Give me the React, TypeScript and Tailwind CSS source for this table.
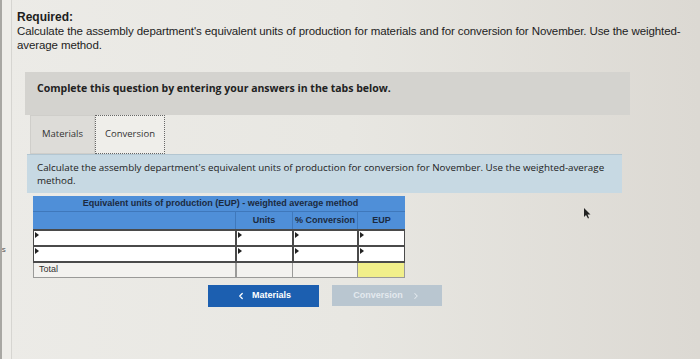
import { ChevronLeft, ChevronRight } from 'lucide-react'

// Tabbed EUP worksheet, photographed screen

const rows = [0, 1]

function Marker() {
  return <span className="absolute left-[1px] top-[1px] w-0 h-0 border-t-[3px] border-b-[3px] border-l-[4px] border-t-transparent border-b-transparent border-l-[#222]" />
}

export default function App() {
  return (
    <div className="relative w-[700px] h-[359px] overflow-hidden flex bg-linear-to-r from-[#ecebe7] via-[#e8e7e2] to-[#dcd9d3] font-['Liberation_Sans',Arial,sans-serif] text-[#1d1d1d]">
      {/* clipped sidebar at the left edge */}
      <div className="w-[12px] shrink-0 border-l-[2px] border-[#a8a7a3] border-r border-r-[#d6d5d1] bg-[#eeede9] pt-[246px] text-[8px] text-[#555] leading-none overflow-hidden">
        <span className="block -ml-[3px]">rs</span>
      </div>

      <div className="flex-1 pl-[5px] pt-[10px]">
        <p className="text-[12px] leading-[14px] font-bold">Required:</p>
        <p className="text-[11.5px] leading-[14px] tracking-[-0.1px] whitespace-nowrap">
          Calculate the assembly department's equivalent units of production for materials and for conversion for November. Use the weighted-
          <br />
          average method.
        </p>

        <div className="mt-[20px] ml-[8px] w-[605px] h-[43px] bg-[#d4d3cf] pl-[12px] pt-[9px] font-['Open_Sans',sans-serif] text-[10.5px] font-bold text-[#222]">
          Complete this question by entering your answers in the tabs below.
        </div>

        {/* tabs */}
        <div className="ml-[13px] flex h-[39px] font-['Open_Sans',sans-serif] text-[9.5px] text-[#333]">
          <div className="w-[65px] bg-[#dddcd8] border border-[#cfceca] flex items-center justify-center">Materials</div>
          <div className="w-[70px] bg-[#efeeea] border border-dotted border-[#666] flex items-center justify-center">Conversion</div>
        </div>

        <div className="ml-[10px] w-[595px] h-[39px] bg-[#c7d9e3] border-t border-[#b3c6d1] pl-[10px] pt-[6px] font-['Open_Sans',sans-serif] text-[9.8px] leading-[13px] text-[#222] whitespace-nowrap">
          Calculate the assembly department's equivalent units of production for conversion for November. Use the weighted-average
          <br />
          method.
        </div>

        {/* EUP table */}
        <div className="mt-[3px] ml-[16px] w-[372px] text-[9px] font-bold text-[#1b2a3f]">
          <div className="h-[16px] bg-[#4f8fd8] border-b border-[#3f78bb] flex items-center justify-center pl-[3px]">
            Equivalent units of production (EUP) - weighted average method
          </div>
          <div className="h-[17px] bg-[#4f8fd8] grid grid-cols-[202px_57px_65px_48px]">
            <div />
            <div className="border-l border-[#3f78bb] flex items-center justify-center">Units</div>
            <div className="border-l border-[#3f78bb] flex items-center justify-center">% Conversion</div>
            <div className="border-l border-[#3f78bb] flex items-center justify-center">EUP</div>
          </div>
          {rows.map((r) => (
            <div key={r} className="h-[16px] grid grid-cols-[202px_57px_65px_48px] border-t-2 border-[#4a4a4a] bg-white">
              <div className="relative border-l border-[#4a4a4a]"><Marker /></div>
              <div className="relative border-l-2 border-[#4a4a4a]"><Marker /></div>
              <div className="relative border-l-2 border-[#4a4a4a]"><Marker /></div>
              <div className="relative border-l-2 border-r border-[#4a4a4a]"><Marker /></div>
            </div>
          ))}
          <div className="h-[17px] grid grid-cols-[202px_57px_65px_48px] border-t-2 border-[#4a4a4a] bg-[#f3f2ef] font-normal text-[9px] text-[#333]">
            <div className="border-l border-b border-[#9a9a98] pl-[5px] flex items-center">Total</div>
            <div className="border-l-2 border-b border-[#9a9a98]" />
            <div className="border-l border-b border-[#9a9a98]" />
            <div className="border-l border-b border-r border-[#9a9a98] bg-[#f1ef8a]" />
          </div>
        </div>

        {/* nav buttons */}
        <div className="mt-[7px] ml-[191px] flex gap-[13px] text-[9px] font-bold">
          <button className="w-[111px] h-[22px] bg-[#1c5fb0] text-white flex items-center justify-center gap-[6px]">
            <ChevronLeft className="w-[10px] h-[10px]" strokeWidth={3} />
            Materials
          </button>
          <button className="w-[110px] h-[21px] bg-[#b9c6d0] text-[#e3e9ee] flex items-center justify-center gap-[8px]">
            Conversion
            <ChevronRight className="w-[10px] h-[10px]" strokeWidth={2.5} />
          </button>
        </div>
      </div>

      {/* mouse pointer */}
      <svg className="absolute left-[583px] top-[208px]" width="8" height="11" viewBox="0 0 8 11">
        <path d="M1 0 L1 9 L3 7 L5 10.5 L6 10 L4.5 6.5 L7.5 6.5 Z" fill="#222" />
      </svg>
    </div>
  )
}
